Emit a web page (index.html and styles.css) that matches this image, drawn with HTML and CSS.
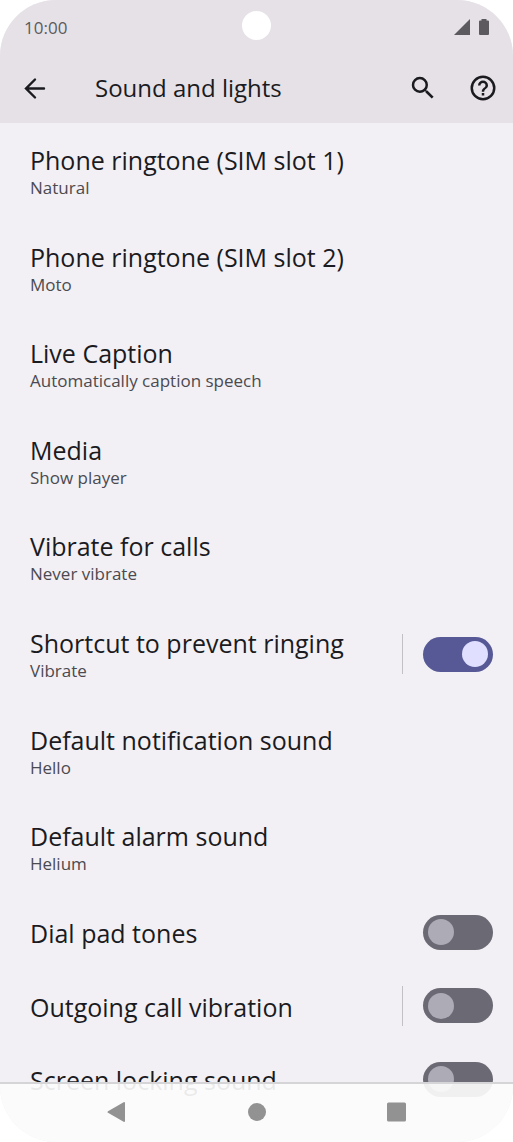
FILE: index.html
```html
<!DOCTYPE html>
<html lang="en">
<head>
<meta charset="utf-8">
<meta name="viewport" content="width=device-width, initial-scale=1">
<title>Sound and lights</title>
<link rel="stylesheet" href="styles.css">
</head>
<body>
<div class="phone">
  <div class="status-bar">
    <span class="clock">10:00</span>
    <span class="camera"></span>
    <span class="status-icons">
      <svg width="16" height="16" viewBox="0 0 16 16" aria-hidden="true"><path d="M0 16 16 0V16Z"/></svg>
      <svg width="10" height="16" viewBox="0 0 10 16" aria-hidden="true"><path d="M2.500 0H7.500V1.500H9a1 1 0 0 1 1 1V15a1 1 0 0 1-1 1H1a1 1 0 0 1-1-1V2.500a1 1 0 0 1 1-1H2.500Z"/></svg>
    </span>
  </div>
  <header class="app-bar">
    <button class="icon-button" type="button" aria-label="Back">
      <svg width="30" height="30" viewBox="0 0 30 30" fill="none" stroke="currentColor" stroke-width="2.4" stroke-linecap="round" aria-hidden="true"><path d="M24 15.500H6.500M15 6.500 6 15.500l9 9"/></svg>
    </button>
    <h1 class="app-title">Sound and lights</h1>
    <button class="icon-button" type="button" aria-label="Search">
      <svg width="30" height="30" viewBox="0 0 24 24" fill="currentColor" aria-hidden="true"><path d="M15.5 14h-.79l-.28-.27A6.471 6.471 0 0 0 16 9.5 6.5 6.5 0 1 0 9.5 16c1.610 0 3.090-.59 4.230-1.570l.27.28v.79l5 4.990L20.490 19zM9.500 14a4.500 4.500 0 1 1 0-9 4.500 4.500 0 0 1 0 9z"/></svg>
    </button>
    <button class="icon-button" type="button" aria-label="Help">
      <svg width="30" height="30" viewBox="0 0 24 24" fill="currentColor" aria-hidden="true"><path d="M11 18h2v-2h-2zm1-16a10 10 0 1 0 0 20 10 10 0 0 0 0-20zm0 18a8 8 0 1 1 0-16 8 8 0 0 1 0 16zm0-14a4 4 0 0 0-4 4h2a2 2 0 1 1 4 0c0 2-3 1.750-3 5h2c0-2.250 3-2.500 3-5a4 4 0 0 0-4-4z"/></svg>
    </button>
  </header>
  <main class="settings">
    <button class="row" type="button"><span class="title">Phone ringtone (SIM slot 1)</span><span class="summary">Natural</span></button>
    <button class="row" type="button"><span class="title">Phone ringtone (SIM slot 2)</span><span class="summary">Moto</span></button>
    <button class="row" type="button"><span class="title">Live Caption</span><span class="summary">Automatically caption speech</span></button>
    <button class="row" type="button"><span class="title">Media</span><span class="summary">Show player</span></button>
    <button class="row" type="button"><span class="title">Vibrate for calls</span><span class="summary">Never vibrate</span></button>
    <div class="row with-switch">
      <label class="text" for="shortcut"><span class="title">Shortcut to prevent ringing</span><span class="summary">Vibrate</span></label>
      <span class="divider"></span>
      <input class="switch" id="shortcut" type="checkbox" role="switch" checked>
    </div>
    <button class="row" type="button"><span class="title">Default notification sound</span><span class="summary">Hello</span></button>
    <button class="row" type="button"><span class="title">Default alarm sound</span><span class="summary">Helium</span></button>
    <div class="row short with-switch">
      <label class="text" for="dialpad"><span class="title">Dial pad tones</span></label>
      <input class="switch" id="dialpad" type="checkbox" role="switch">
    </div>
    <div class="row short with-switch">
      <label class="text" for="outgoing"><span class="title">Outgoing call vibration</span></label>
      <span class="divider"></span>
      <input class="switch" id="outgoing" type="checkbox" role="switch">
    </div>
    <div class="row short with-switch">
      <label class="text" for="locking"><span class="title">Screen locking sound</span></label>
      <input class="switch" id="locking" type="checkbox" role="switch">
    </div>
  </main>
  <nav class="nav-bar" aria-label="System navigation">
    <button class="nav-button" type="button" aria-label="Back"><svg width="20" height="20" viewBox="0 0 20 20" aria-hidden="true"><path d="M18 1V19a1 1 0 0 1-1.400.8L1 10.800a1 1 0 0 1 0-1.600L16.600.2A1 1 0 0 1 18 1Z"/></svg></button>
    <button class="nav-button" type="button" aria-label="Home"><svg width="20" height="20" viewBox="0 0 20 20" aria-hidden="true"><circle cx="10" cy="10" r="9"/></svg></button>
    <button class="nav-button" type="button" aria-label="Recent apps"><svg width="20" height="20" viewBox="0 0 20 20" aria-hidden="true"><rect x="0" y="0.500" width="19" height="19" rx="1.500"/></svg></button>
  </nav>
</div>
</body>
</html>
```
FILE: styles.css
```css
* {
  box-sizing: border-box;
}

body {
  margin: 0;
  background: #fff;
  color: #1b1b1f;
  font-family: "Open Sans", "Noto Sans", sans-serif;
}

button {
  margin: 0;
  border: 0;
  background: none;
  color: inherit;
  font: inherit;
}

.phone {
  position: relative;
  display: flex;
  flex-direction: column;
  height: 100vh;
  overflow: hidden;
  border-radius: 56px;
  background: #f2f0f4;
}

.status-bar {
  display: grid;
  grid-template-columns: 1fr auto 1fr;
  align-items: center;
  flex: none;
  height: 53px;
  padding: 0 24px;
  background: #e5e1e7;
  color: #5c5a5e;
}

.clock {
  padding-top: 2px;
  font-size: 17px;
}

.camera {
  width: 29px;
  height: 29px;
  margin-bottom: 2px;
  border-radius: 50%;
  background: #fff;
}

.status-icons {
  display: flex;
  justify-content: flex-end;
  gap: 9px;
  fill: currentColor;
}

.app-bar {
  display: flex;
  align-items: center;
  flex: none;
  height: 70px;
  padding: 0 10px 0 15px;
  background: #e5e1e7;
}

.app-title {
  flex: 1;
  margin: 0;
  padding: 0 0 2px 40px;
  font-size: 24px;
  font-weight: 400;
}

.icon-button {
  display: flex;
  padding: 5px;
}

.icon-button + .icon-button {
  margin-left: 20px;
}

.settings {
  display: flex;
  flex-direction: column;
  flex: 1;
  margin-bottom: 26px;
}

.row {
  display: flex;
  flex-direction: column;
  justify-content: center;
  flex: 1 0 96px;
  padding: 0 20px 0 30px;
  text-align: left;
}

.row.short {
  flex-basis: 73px;
}

.row.with-switch {
  flex-direction: row;
  align-items: center;
}

.text {
  flex: 1;
}

.title,
.summary {
  display: block;
}

.title {
  padding-top: 2px;
  font-size: 25px;
  line-height: 32px;
}

.summary {
  color: #4b4a50;
  font-size: 17px;
  line-height: 24px;
}

.divider {
  width: 1px;
  height: 40px;
  margin-right: 20px;
  background: #c2c0c5;
}

.switch {
  appearance: none;
  display: flex;
  align-items: center;
  width: 70px;
  height: 35px;
  margin: 0;
  padding: 0 5px;
  border-radius: 18px;
  background: #6b6973;
}

.switch::before {
  content: "";
  width: 26px;
  height: 26px;
  border-radius: 50%;
  background: #adabb6;
}

.switch:checked {
  justify-content: flex-end;
  background: #575997;
}

.switch:checked::before {
  background: #e0dfff;
}

.nav-bar {
  position: absolute;
  inset: auto 0 0;
  display: flex;
  justify-content: center;
  height: 60px;
  padding-bottom: 2px;
  border-top: 2px solid #d5d4d7;
  background: rgba(252, 252, 252, 0.92);
  background-clip: padding-box;
}

.nav-button {
  display: flex;
  align-items: center;
  justify-content: center;
  width: 140px;
  fill: #929292;
}
```
